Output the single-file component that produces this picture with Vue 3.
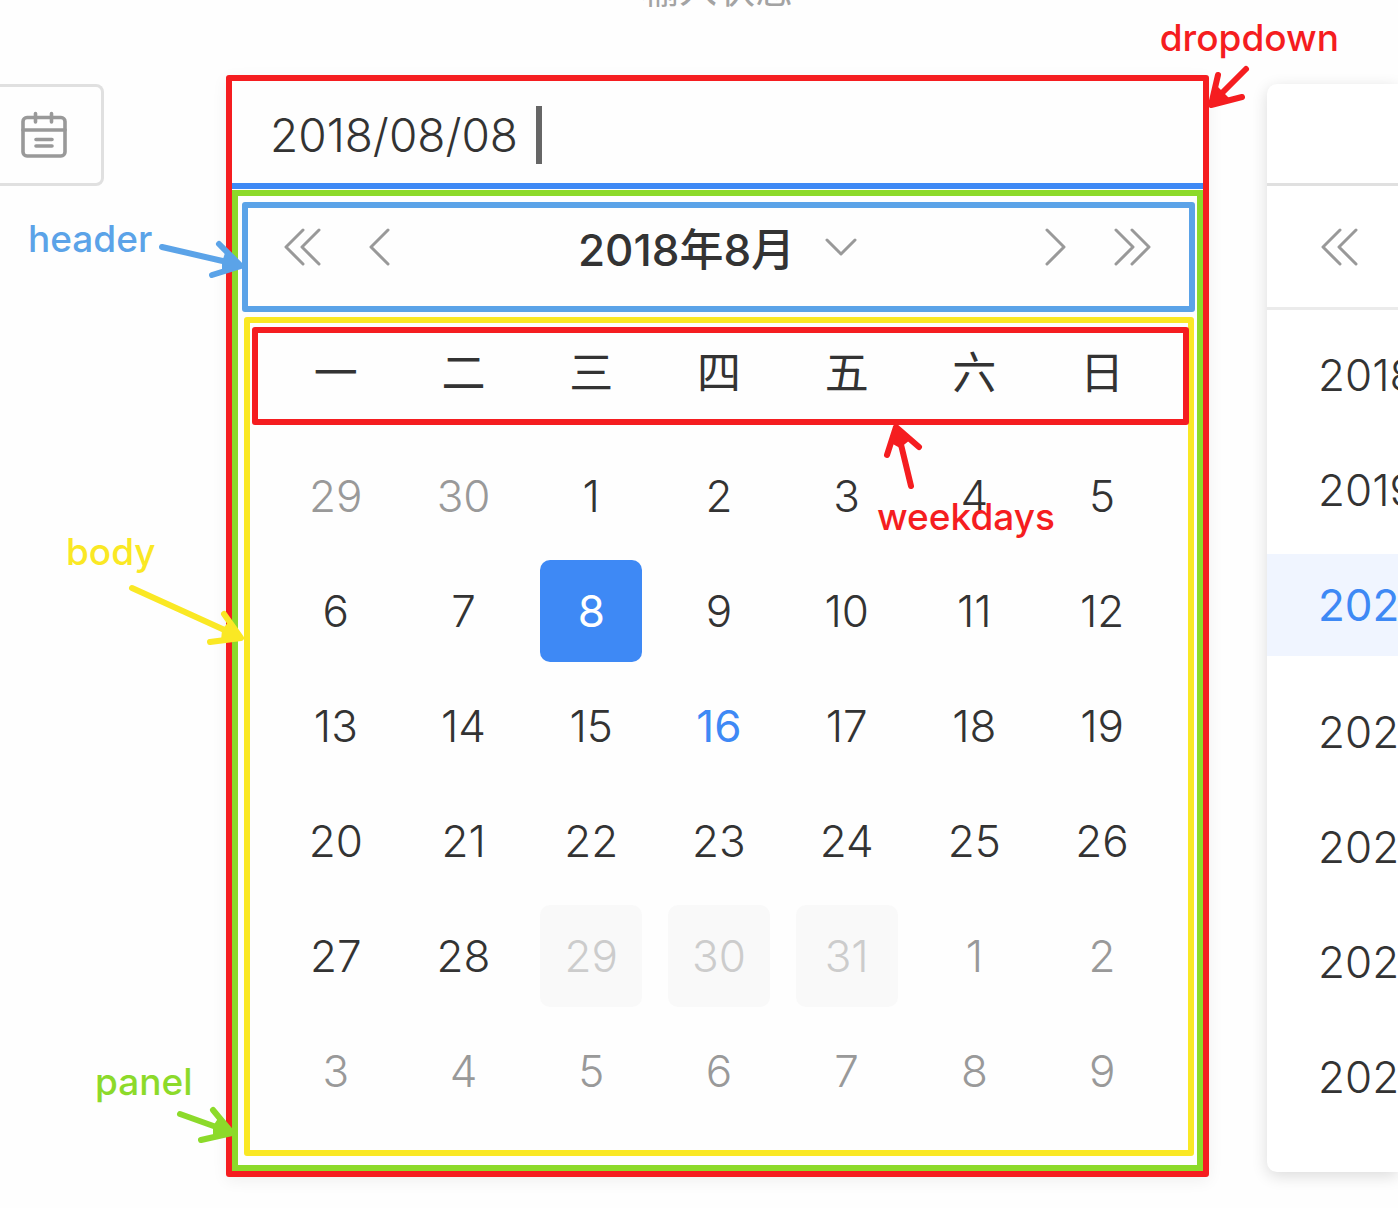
<script setup>
const weekdays = ['一', '二', '三', '四', '五', '六', '日']

const range = (from, to, state = '') =>
  Array.from({ length: to - from + 1 }, (_, i) => ({ day: from + i, state }))

const days = [
  ...range(29, 30, 'outside'),
  ...range(1, 7),
  { day: 8, state: 'selected' },
  ...range(9, 15),
  { day: 16, state: 'today' },
  ...range(17, 28),
  ...range(29, 31, 'disabled'),
  ...range(1, 9, 'outside'),
]
const weeks = Array.from({ length: 6 }, (_, i) => days.slice(i * 7, i * 7 + 7))

const years = [2018, 2019, 2020, 2021, 2022, 2023, 2024]
const currentYear = 2020
</script>

<template>
  <main class="page">
    <p class="caption">输入状态</p>

    <div class="board">
      <div class="closed-field">
        <button type="button" class="plain" aria-label="打开日历">
          <svg width="46" height="48" viewBox="0 0 46 48" fill="none" stroke="#999" stroke-width="3.6" stroke-linecap="round">
            <rect x="2" y="6.500" width="42" height="38.500" rx="4" />
            <path d="M2 19H44M14.500 2.500V11M30.500 2.500V11M15 28.500H31M15 35H31" />
          </svg>
        </button>
      </div>

      <section class="dropdown">
        <div class="entry">
          <input type="text" value="2018/08/08" aria-label="日期" />
          <span class="caret"></span>
        </div>

        <div class="panel">
          <header class="panel-header">
            <div class="nav">
              <button type="button" class="plain" aria-label="上一年">
                <svg width="37" height="38" viewBox="0 0 37 38" class="glyph"><path d="M19 2L2 19L19 36M35 2L18 19L35 36" /></svg>
              </button>
              <button type="button" class="plain" aria-label="上个月">
                <svg width="21" height="38" viewBox="0 0 21 38" class="glyph"><path d="M19 2L2 19L19 36" /></svg>
              </button>
            </div>
            <button type="button" class="plain title">
              2018年8月
              <svg width="32" height="18" viewBox="0 0 32 18" class="glyph"><path d="M2 2L16 16L30 2" /></svg>
            </button>
            <div class="nav">
              <button type="button" class="plain" aria-label="下个月">
                <svg width="21" height="38" viewBox="0 0 21 38" class="glyph"><path d="M2 2L19 19L2 36" /></svg>
              </button>
              <button type="button" class="plain" aria-label="下一年">
                <svg width="37" height="38" viewBox="0 0 37 38" class="glyph"><path d="M2 2L19 19L2 36M18 2L35 19L18 36" /></svg>
              </button>
            </div>
          </header>

          <div class="panel-body">
            <table>
              <thead>
                <tr>
                  <th v-for="name in weekdays" :key="name" scope="col">{{ name }}</th>
                </tr>
              </thead>
              <tbody>
                <tr v-for="(week, w) in weeks" :key="w">
                  <td v-for="(cell, d) in week" :key="d">
                    <button type="button" class="day" :class="cell.state" :disabled="cell.state === 'disabled'">{{ cell.day }}</button>
                  </td>
                </tr>
              </tbody>
            </table>
          </div>
        </div>

        <span class="note note-header">header</span>
        <span class="note note-body">body</span>
        <span class="note note-panel">panel</span>
        <span class="note note-weekdays">weekdays</span>
        <span class="note note-dropdown">dropdown</span>

        <svg class="arrows" width="10" height="10" viewBox="232 81 10 10">
          <g class="blue">
            <path class="head" d="M226 250L242 266L222 273L222 262Z" />
            <path d="M162 247L240 265M219 244L241 266L212 275" />
          </g>
          <g class="yellow">
            <path class="head" d="M229 621L242 638L221 641L222 630Z" />
            <path d="M132 588L240 637M224 614L241 638L210 642" />
          </g>
          <g class="green">
            <path class="head" d="M219 1117L234 1134L213 1138L213 1126Z" />
            <path d="M180 1114L233 1133M213 1110L232 1133L201 1140" />
          </g>
          <g class="red">
            <path class="head" d="M891 443L896 426L910 440L900 448Z" />
            <path d="M911 486L897 428M887 455L896 427L919 447" />
          </g>
        </svg>
        <svg class="arrows arrows-end" width="10" height="10" viewBox="1203 81 10 10">
          <g class="red">
            <path class="head" d="M1216 85L1210 106L1231 100L1223 92Z" />
            <path d="M1246 69L1211 104M1218 75L1211 105L1242 97" />
          </g>
        </svg>
      </section>

      <aside class="year-card">
        <div class="year-entry"></div>
        <div class="year-header">
          <button type="button" class="plain" aria-label="前十年">
            <svg width="37" height="38" viewBox="0 0 37 38" class="glyph"><path d="M19 2L2 19L19 36M35 2L18 19L35 36" /></svg>
          </button>
        </div>
        <ul class="years">
          <li v-for="year in years" :key="year" :class="{ current: year === currentYear }">{{ year }}</li>
        </ul>
      </aside>
    </div>
  </main>
</template>

<style>
body {
  margin: 0;
  background: #fff;
}
</style>

<style scoped>
.page {
  box-sizing: border-box;
  min-height: 100vh;
  overflow: hidden;
  background: #fefefe;
  color: #333;
  font-family: Inter, "Noto Sans CJK SC", sans-serif;
  font-size: 44px;
  font-weight: 300;
}

.caption {
  display: flex;
  align-items: flex-end;
  justify-content: center;
  height: 8px;
  margin: 0;
  padding-left: 36px;
  color: #a3a3a3;
  font-size: 38px;
  font-weight: 400;
  line-height: 38px;
}

.board {
  display: flex;
  align-items: flex-start;
  padding: 67px 0 30px;
}

.plain {
  display: flex;
  align-items: center;
  padding: 0;
  border: 0;
  background: none;
  color: inherit;
  font: inherit;
}

.glyph {
  fill: none;
  stroke: #999;
  stroke-width: 3;
  stroke-linecap: round;
  stroke-linejoin: round;
}

.closed-field {
  box-sizing: border-box;
  display: flex;
  flex: none;
  justify-content: flex-end;
  align-items: center;
  width: 104px;
  height: 102px;
  margin-top: 9px;
  padding-right: 34px;
  border: 3px solid #e0e0e0;
  border-left: 0;
  border-radius: 0 8px 8px 0;
}

.dropdown {
  position: relative;
  flex: 1;
  margin: 0 58px 0 122px;
  border: 6px solid #f51d20;
  border-radius: 3px;
  box-shadow: 0 4px 16px rgba(0, 0, 0, 0.06);
}

.entry {
  display: flex;
  align-items: center;
  height: 102px;
  padding-left: 38px;
  border-bottom: 6px solid #3e89f5;
}

.entry input {
  width: 266px;
  padding: 6px 0 0;
  border: 0;
  outline: 0;
  background: none;
  color: #333;
  font: inherit;
  font-size: 46px;
}

.caret {
  width: 6px;
  height: 58px;
  margin-top: 6px;
  background: #666;
}

.panel {
  margin-top: 1px;
  padding: 6px 0 9px;
  border: 6px solid #8cda2a;
}

.panel-header {
  display: flex;
  align-items: center;
  justify-content: space-between;
  height: 78px;
  margin: 0 2px 0 4px;
  padding: 0 38px 20px 36px;
  border: 6px solid #5ba3e8;
  border-radius: 3px;
}

.nav {
  display: flex;
  gap: 48px;
}

.title {
  gap: 30px;
  font-weight: 500;
}

.panel-body {
  margin: 5px 3px 0 6px;
  padding: 4px 22px 22px;
  border: 6px solid #fae824;
  border-radius: 3px;
}

table {
  width: 100%;
  table-layout: fixed;
  border-collapse: collapse;
}

thead {
  position: relative;
}

/* frame that marks the weekday row */
thead::after {
  content: "";
  position: absolute;
  inset: 0 -23px 13px -20px;
  border: 6px solid #f51d20;
  border-radius: 3px;
}

th {
  height: 85px;
  padding: 0 0 26px;
  font-weight: 400;
}

td {
  height: 115px;
  padding: 0;
}

.day {
  display: block;
  width: 102px;
  height: 102px;
  margin: 0 auto;
  padding: 0;
  border: 0;
  border-radius: 10px;
  background: none;
  color: #333;
  font: inherit;
}

.day.outside {
  color: #999;
}

.day.disabled {
  background: #f9f9f9;
  color: #ccc;
}

.day.selected {
  background: #3e89f5;
  color: #fff;
  font-weight: 400;
}

.day.today {
  color: #3e89f5;
  font-weight: 400;
}

.year-card {
  flex: none;
  width: 131px;
  height: 1088px;
  margin-top: 9px;
  border-radius: 10px 0 0 10px;
  background: #fff;
  box-shadow: 0 4px 16px rgba(0, 0, 0, 0.14);
}

.year-entry {
  height: 99px;
  border-bottom: 3px solid #e0e0e0;
}

.year-header {
  display: flex;
  align-items: center;
  height: 121px;
  padding-left: 54px;
  border-bottom: 3px solid #ebebeb;
}

.years {
  display: flex;
  flex-direction: column;
  gap: 13px;
  margin: 0;
  padding: 14px 0 0;
  list-style: none;
}

.years li {
  height: 102px;
  padding-left: 51px;
  overflow: hidden;
  line-height: 102px;
}

.years .current {
  margin-bottom: 12px;
  background: #f0f5ff;
  color: #3e89f5;
  font-weight: 400;
}

.note {
  position: absolute;
  font-size: 37px;
  font-weight: 500;
  line-height: 46px;
}

.note-header {
  top: 135px;
  left: -204px;
  color: #5ba3e8;
}

.note-body {
  top: 448px;
  left: -166px;
  color: #fae824;
}

.note-panel {
  top: 978px;
  left: -137px;
  color: #8cda2a;
}

.note-weekdays {
  top: 413px;
  left: 645px;
  color: #f51d20;
}

.note-dropdown {
  top: -66px;
  right: -136px;
  color: #f51d20;
}

.arrows {
  position: absolute;
  top: 0;
  left: 0;
  overflow: visible;
  fill: none;
  stroke-width: 6;
  stroke-linecap: round;
  stroke-linejoin: round;
}

.arrows-end {
  left: 100%;
}

.blue { stroke: #5ba3e8; }
.yellow { stroke: #fae824; }
.green { stroke: #8cda2a; }
.red { stroke: #f51d20; }

.head { stroke: none; }
.blue .head { fill: #5ba3e8; }
.yellow .head { fill: #fae824; }
.green .head { fill: #8cda2a; }
.red .head { fill: #f51d20; }
</style>
